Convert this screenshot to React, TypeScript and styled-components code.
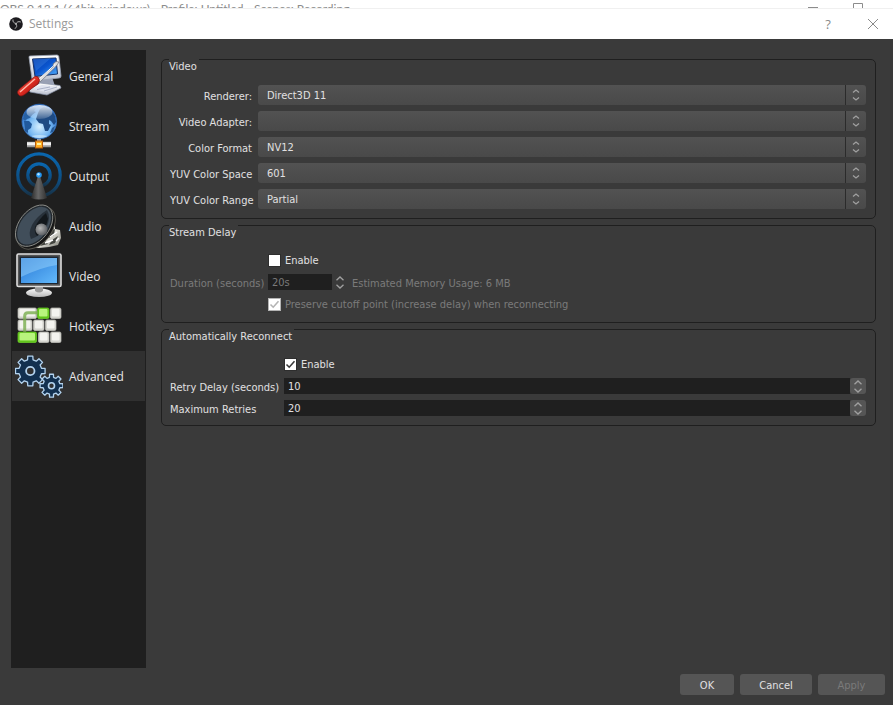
import React, { useState } from "react";
import styled, { createGlobalStyle } from "styled-components";

const GlobalStyle = createGlobalStyle`
  * { box-sizing: border-box; }
  body {
    margin: 0;
    background: #3a3a3a;
    color: #e1e0e1;
    font: 11px/16px "DejaVu Sans Condensed", "Noto Sans", sans-serif;
  }
  button, input, select { font: inherit; color: inherit; margin: 0; }
`;

const Page = styled.div`
  display: flex;
  flex-direction: column;
  min-height: 100vh;
`;

const ParentBar = styled.div`
  display: flex;
  justify-content: space-between;
  height: 9px;
  padding-right: 30px;
  overflow: hidden;
  background: #fff;
  border-bottom: 1px solid #f0f0f0;
  color: #8c8c8c;
  font: 12px/18px Lato, sans-serif;
  white-space: nowrap;
`;

const TitleBar = styled.header`
  display: flex;
  align-items: center;
  height: 30px;
  padding: 0 13px 0 9px;
  background: #fff;
  color: #999;
`;

const Title = styled.h1`
  flex: 1;
  margin: 0 0 0 6px;
  font: 400 12px/12px "Open Sans", sans-serif;
`;

const CaptionButton = styled.button`
  display: flex;
  align-items: center;
  justify-content: center;
  width: 14px;
  height: 20px;
  margin-left: 31px;
  padding: 0;
  border: 0;
  background: none;
  color: #8a8a8a;
  font: 13px/18px "Open Sans", sans-serif;
`;

const Content = styled.div`
  display: flex;
  flex: 1;
  gap: 15px;
  padding: 11px 17px 6px 11px;
`;

const Sidebar = styled.nav`
  flex: 0 0 135px;
  padding: 1px;
  background: #1f1f1f;
`;

const NavItem = styled.button<{ $active: boolean }>`
  display: flex;
  align-items: center;
  gap: 6px;
  width: 100%;
  height: 50px;
  padding: 0 0 0 3px;
  border: 0;
  background: ${(p) => (p.$active ? "#303030" : "transparent")};
  color: #e6e6e6;
  font: 12px/18px "Open Sans", sans-serif;
  text-align: left;
`;

const NavLabel = styled.span`
  padding-top: 2px;
`;

const Panels = styled.main`
  display: flex;
  flex: 1;
  flex-direction: column;
  gap: 6px;
  padding-top: 9px;
`;

const Group = styled.fieldset<{ $top?: number; $bottom?: number }>`
  min-width: 0;
  margin: 0;
  padding: ${(p) => p.$top ?? 26}px 9px ${(p) => p.$bottom ?? 9}px 8px;
  border: 1px solid #1f1f1f;
  border-radius: 5px;
`;

/* The one-pixel box keeps the caption hanging just under the frame line. */
const Legend = styled.legend`
  height: 1px;
  margin-left: -1px;
  padding: 0 2px 0 0;
  line-height: 16px;
`;

const Form = styled.div<{ $label: number; $gap: number; $space: number }>`
  display: grid;
  grid-template-columns: ${(p) => p.$label}px minmax(0, 1fr);
  column-gap: ${(p) => p.$gap}px;
  row-gap: ${(p) => p.$space}px;
  align-items: center;
`;

const Label = styled.label<{ $right?: boolean; $dim?: boolean }>`
  height: 16px;
  line-height: 20px;
  color: ${(p) => (p.$dim ? "#7a7a7a" : "inherit")};
  text-align: ${(p) => (p.$right ? "right" : "left")};
  white-space: nowrap;
`;

const SelectBox = styled.div`
  position: relative;
  display: flex;
  height: 20px;
`;

const Select = styled.select`
  appearance: none;
  width: 100%;
  padding: 2px 30px 0 9px;
  border: 0;
  border-radius: 3px;
  background: linear-gradient(#525252, #494949);
`;

const SelectArrow = styled.span`
  position: absolute;
  inset: 0 0 0 auto;
  display: flex;
  align-items: center;
  justify-content: center;
  width: 21px;
  border-left: 1px solid #2b2b2b;
  pointer-events: none;
`;

const CheckRow = styled.label<{ $dim?: boolean }>`
  display: flex;
  grid-column: 2;
  align-items: center;
  gap: 4px;
  height: 16px;
  color: ${(p) => (p.$dim ? "#7a7a7a" : "inherit")};
`;

const CheckText = styled.span`
  padding-top: 2px;
`;

const CheckBox = styled.span<{ $dim?: boolean }>`
  display: grid;
  width: 13px;
  height: 13px;
  border: 1px solid ${(p) => (p.$dim ? "#b4b4b4" : "#2e2e2e")};
  background: #fff;
  color: ${(p) => (p.$dim ? "#b4b4b4" : "#3a3a3a")};
  input, svg { grid-area: 1 / 1; }
  input { width: 11px; height: 11px; opacity: 0; }
  input:not(:checked) + svg { visibility: hidden; }
`;

const SpinRow = styled.div`
  display: flex;
  align-items: center;
  height: 16px;
`;

const Field = styled.input<{ $narrow?: boolean }>`
  flex: ${(p) => (p.$narrow ? "0 0 64px" : "1")};
  min-width: 0;
  height: 16px;
  padding: 2px 4px 0;
  border: 0;
  background: #1f1f1f;
  appearance: textfield;
  &::-webkit-inner-spin-button { appearance: none; }
  &:disabled { color: #7a7a7a; }
`;

const Spinner = styled.span<{ $flat?: boolean }>`
  display: flex;
  flex: 0 0 16px;
  flex-direction: column;
  height: 16px;
  border-radius: 3px;
  background: ${(p) => (p.$flat ? "transparent" : "#555")};
`;

const StepButton = styled.button`
  display: flex;
  align-items: center;
  justify-content: center;
  height: 8px;
  padding: 0;
  border: 0;
  background: none;
`;

const Hint = styled.span`
  height: 16px;
  padding-left: 4px;
  color: #7a7a7a;
  line-height: 20px;
  white-space: nowrap;
`;

const Footer = styled.footer`
  display: flex;
  justify-content: flex-end;
  gap: 6px;
  padding: 0 8px 10px;
`;

const PushButton = styled.button<{ $w: number }>`
  width: ${(p) => p.$w}px;
  height: 21px;
  padding: 2px 0 0;
  border: 0;
  border-radius: 3px;
  background: #555;
  &:disabled { color: #7a7a7a; }
`;

const Chevron = ({ down }: { down?: boolean }) => (
  <svg width="10" height="5" viewBox="0 0 10 5" fill="none" stroke="#a0a0a0" strokeWidth="1.3">
    <path d={down ? "M1.5 .7 5 4 8.500 .7" : "M1.5 4.300 5 1 8.500 4.300"} />
  </svg>
);

const Tick = () => (
  <svg width="11" height="11" viewBox="0 0 11 11" fill="none" stroke="currentColor" strokeWidth="1.6">
    <path d="M1.500 5.500 4.200 8.200 9.500 2.300" />
  </svg>
);

const Logo = () => (
  <svg width="14" height="14" viewBox="0 0 14 14" fill="none">
    <circle cx="7" cy="7" r="6.800" fill="#1b1a1e" />
    <path d="M4 2.500C3.500 5 5 6 7 6.500M11.800 5C9 4 7.800 5.200 7 7M5.700 11.500C8.200 10.500 8 8.500 7 7" stroke="#b8b8b8" strokeWidth="1" />
    <circle cx="7" cy="7" r="1" fill="#aaa" />
  </svg>
);

const GeneralIcon = () => (
  <svg width="48" height="48" viewBox="0 0 48 48">
    <defs>
      <linearGradient id="gScreen" x1="0" y1="0" x2="1" y2="1">
        <stop offset="0" stopColor="#0638a5" /><stop offset=".5" stopColor="#0a55cf" /><stop offset="1" stopColor="#58b5ff" />
      </linearGradient>
      <linearGradient id="gHandle" x1="0" y1="0" x2="1" y2="1">
        <stop offset="0" stopColor="#ff8b77" /><stop offset=".5" stopColor="#db2a20" /><stop offset="1" stopColor="#8d0a0a" />
      </linearGradient>
      <linearGradient id="gCase" x1="0" y1="0" x2="0" y2="1">
        <stop offset="0" stopColor="#fff" /><stop offset="1" stopColor="#b9bfce" />
      </linearGradient>
    </defs>
    <path d="M22 27 37 25 40 34 25 35Z" fill="#98a0b4" />
    <path d="M14 37 25 31 45 33.500 46 36 32 43 15 40Z" fill="url(#gCase)" stroke="#8790a6" strokeWidth=".7" />
    <path d="M18 37 27 33 42 35 31 40Z" fill="#dfe3ef" />
    <path d="M29 39 42 35M22 37.500 35 35" stroke="#aab2c7" />
    <path d="M14 5Q14 4 15 4L42 3Q43.500 3 43.800 4.500L46 24Q46 26 44 26L19 29Q17.500 29 17 27Z" fill="url(#gCase)" stroke="#9ba3b5" strokeWidth=".8" />
    <path d="M17.500 7 41 6 42.500 22 20 24.500Z" fill="url(#gScreen)" stroke="#163167" />
    <path d="M18 7 36 6 21 19Z" fill="#4c94ee" opacity=".3" />
    <path d="M22 28 38.500 14.500 38 12 41 9.500 44 10 42 13 40 15.500 25 30Z" fill="#ddd" stroke="#676b77" strokeWidth=".7" />
    <path d="M24 27 40 12.500" stroke="#fff" />
    <path d="M3 42Q1 39 8 34Q14 29 18 26Q20 23 23 25Q26 28 23 32L16 37Q9 44 6 44Q4 44 3 42Z" fill="url(#gHandle)" stroke="#811" strokeWidth=".7" />
    <path d="M5 40Q13 33 20 27" stroke="#ffb8a8" strokeWidth="1.500" fill="none" />
  </svg>
);

const StreamIcon = () => (
  <svg width="48" height="48" viewBox="0 0 48 48">
    <defs>
      <radialGradient id="sSea" cx=".5" cy=".65" r=".6">
        <stop offset="0" stopColor="#d5efff" /><stop offset=".55" stopColor="#72b5f1" /><stop offset="1" stopColor="#1d62c4" />
      </radialGradient>
      <linearGradient id="sGlow" x1="0" y1="0" x2="0" y2="1">
        <stop offset="0" stopColor="#fff" stopOpacity=".85" /><stop offset="1" stopColor="#fff" stopOpacity=".15" />
      </linearGradient>
    </defs>
    <path d="M24 34V42" stroke="#aaa" strokeWidth="4" />
    <path d="M12 42.500H36" stroke="#999" strokeWidth="5.500" />
    <path d="M12 41.800H36" stroke="#f1f1f1" strokeWidth="3" />
    <rect x="20.500" y="39" width="7" height="7" fill="#ffae22" stroke="#b65c0b" />
    <path d="M22 41H26V43H22Z" fill="#fff0a0" />
    <circle cx="24.300" cy="19.500" r="17.300" fill="url(#sSea)" stroke="#356fb9" strokeWidth=".8" />
    <path d="M9 13Q12 7 18 5L21 6 19 9 21 10 17 13 15 16 12 17 10 19 8 17Z" fill="#2861a4" />
    <path d="M9 19 14 19 17 22 16 26 13 28 13 31 10 29Z" fill="#21599c" />
    <path d="M23 11 25 7 29 5 36 8 40 14 41 20 39 23 36 19 34 18 34 22 36 23 33 29 30 29 28 22 24 21 21 17Z" fill="#1e4b84" />
    <path d="M37 26 40 24 38 30 35 31Z" fill="#245894" />
    <ellipse cx="24.500" cy="10" rx="13" ry="7" fill="url(#sGlow)" />
    <path d="M16 34Q24 32 33 34Q24 38 16 34Z" fill="#dcf1ff" opacity=".6" />
  </svg>
);

const OutputIcon = () => (
  <svg width="48" height="48" viewBox="0 0 48 48">
    <defs>
      <linearGradient id="oRing" x1="0" y1="0" x2="0" y2="1">
        <stop offset="0" stopColor="#0a66ad" /><stop offset=".6" stopColor="#0c4f85" /><stop offset="1" stopColor="#183144" />
      </linearGradient>
      <linearGradient id="oCone" x1="0" y1="0" x2="1" y2="0">
        <stop offset="0" stopColor="#292929" /><stop offset=".45" stopColor="#666" /><stop offset="1" stopColor="#303030" />
      </linearGradient>
    </defs>
    <circle cx="24" cy="23" r="21.200" fill="none" stroke="url(#oRing)" strokeWidth="3.200" />
    <circle cx="24" cy="23" r="11.200" fill="none" stroke="url(#oRing)" strokeWidth="3.200" />
    <path d="M23 24H25L32 46Q24 49 16 46Z" fill="url(#oCone)" />
    <circle cx="24" cy="23" r="2.800" fill="#2497f2" />
    <circle cx="23.500" cy="22.200" r="1.200" fill="#b4e2ff" />
  </svg>
);

const AudioIcon = () => (
  <svg width="48" height="48" viewBox="0 0 48 48">
    <defs>
      <linearGradient id="aBody" x1="0" y1="0" x2="1" y2="1">
        <stop offset="0" stopColor="#555" /><stop offset=".6" stopColor="#e8e8e0" /><stop offset="1" stopColor="#77776f" />
      </linearGradient>
      <radialGradient id="aCap" cx=".4" cy=".4" r=".7">
        <stop offset="0" stopColor="#b5b5b5" /><stop offset="1" stopColor="#4d5155" />
      </radialGradient>
    </defs>
    <path d="M36 17 40 23 40 27 45 28 46 36 43 43 34 45 24 46 13 45 27 37Z" fill="url(#aBody)" />
    <path d="M36 29 40 27 39 33 34 36M37 38 43 34 40 41 34 43M25 44 30 39 33 42" fill="#42443f" />
    <path d="M35 35 42 30M30 41 38 38M41 39 44 36" stroke="#fff" strokeWidth="1.500" />
    <g transform="rotate(-52 19.500 24)">
      <ellipse cx="19" cy="26.500" rx="24" ry="15.500" fill="#161616" stroke="#5a5850" />
      <ellipse cx="19.500" cy="23.500" rx="23.500" ry="15" fill="#22282e" stroke="#8c8d88" strokeWidth=".9" />
      <ellipse cx="19.500" cy="23.500" rx="21.500" ry="13.300" fill="#414e5a" />
    </g>
    <path d="M32 8Q22 14 17 23Q13 31 16 37Q26 34 32 24Q36 15 32 8Z" fill="#0b0f13" opacity=".45" />
    <path d="M31 11Q24 17 20 25Q19 31 22 34Q31 28 33 17Z" fill="#080a0d" opacity=".65" />
    <circle cx="26.500" cy="27.500" r="6" fill="url(#aCap)" />
  </svg>
);

const VideoIcon = () => (
  <svg width="48" height="48" viewBox="0 0 48 48">
    <defs>
      <linearGradient id="vScreen" x1="0" y1="0" x2="1" y2="1">
        <stop offset="0" stopColor="#2878d5" /><stop offset="1" stopColor="#63b9fb" />
      </linearGradient>
      <linearGradient id="vFoot" x1="0" y1="0" x2="0" y2="1">
        <stop offset="0" stopColor="#fafafa" /><stop offset="1" stopColor="#b9b9b9" />
      </linearGradient>
    </defs>
    <ellipse cx="24" cy="40.700" rx="13" ry="4.300" fill="url(#vFoot)" />
    <path d="M20 34H28V39Q24 42 20 39Z" fill="#999" />
    <rect x="2" y="2" width="44" height="32.500" rx="1.500" fill="#555" stroke="#dedede" strokeWidth="1.600" />
    <rect x="4.500" y="4.500" width="39" height="27.500" fill="#1d2733" />
    <rect x="6" y="6" width="36" height="25" fill="url(#vScreen)" />
    <path d="M6 6H42V13Q27 15 6 25Z" fill="#a7ddff" opacity=".42" />
  </svg>
);

const keyCaps = [
  { x: 3, y: 6, w: 18.5, green: false }, { x: 22.5, y: 6, w: 11.5, green: true }, { x: 35.5, y: 6, w: 10.5, green: false },
  { x: 3, y: 18, w: 14, green: false }, { x: 18.5, y: 18, w: 10.5, green: false }, { x: 30.5, y: 18, w: 10.5, green: false },
  { x: 3, y: 30, w: 18.5, green: true }, { x: 23.5, y: 30, w: 10.5, green: false }, { x: 35.5, y: 30, w: 10.5, green: false },
];

const HotkeysIcon = () => (
  <svg width="48" height="48" viewBox="0 0 48 48">
    {keyCaps.map((k) => (
      <g key={`${k.x}-${k.y}`}>
        <rect x={k.x} y={k.y} width={k.w} height="10.5" rx="1.500" fill={k.green ? "#62c51c" : "#d4d4ce"} stroke={k.green ? "#72d72d" : "#c4c4be"} strokeWidth=".7" />
        <rect x={k.x + 1.5} y={k.y + 1} width={k.w - 3} height="7.5" rx="1" fill={k.green ? "#b8f47d" : "#f3f3ef"} />
      </g>
    ))}
    <path d="M9.700 31V14Q9.700 10.700 13 10.700H23" fill="none" stroke="#78ad4e" strokeWidth="3" opacity=".8" />
  </svg>
);

const gearPath = (cx: number, cy: number, outer: number, inner: number) => {
  const points: string[] = [];
  for (let i = 0; i < 8; i++) {
    const mid = (i * Math.PI) / 4;
    [[inner, -0.24], [outer, -0.17], [outer, 0.17], [inner, 0.24]].forEach(([r, a]) =>
      points.push(`${(cx + r * Math.cos(mid + a)).toFixed(2)} ${(cy + r * Math.sin(mid + a)).toFixed(2)}`)
    );
  }
  return `M${points.join("L")}Z`;
};

const AdvancedIcon = () => (
  <svg width="48" height="48" viewBox="0 0 48 48" fill="#12304f" stroke="#b3d3ef" strokeLinejoin="round">
    <path d={gearPath(15.3, 19, 15, 11.5)} strokeWidth="1.300" />
    <circle cx="15.300" cy="19" r="4.200" fill="#303030" strokeWidth="1.800" />
    <path d={gearPath(36.5, 33.7, 11.6, 8.6)} strokeWidth="1.300" />
    <circle cx="36.500" cy="33.700" r="3" fill="#303030" strokeWidth="1.600" />
  </svg>
);

const sections = [
  { name: "General", Icon: GeneralIcon },
  { name: "Stream", Icon: StreamIcon },
  { name: "Output", Icon: OutputIcon },
  { name: "Audio", Icon: AudioIcon },
  { name: "Video", Icon: VideoIcon },
  { name: "Hotkeys", Icon: HotkeysIcon },
  { name: "Advanced", Icon: AdvancedIcon },
];

const videoOptions = [
  { id: "renderer", label: "Renderer:", value: "Direct3D 11" },
  { id: "adapter", label: "Video Adapter:", value: "" },
  { id: "format", label: "Color Format", value: "NV12" },
  { id: "space", label: "YUV Color Space", value: "601" },
  { id: "range", label: "YUV Color Range", value: "Partial" },
];

const Steps = ({ flat, name, onStep }: { flat?: boolean; name: string; onStep?: (by: number) => void }) => (
  <Spinner $flat={flat}>
    <StepButton type="button" disabled={flat} aria-label={`Increase ${name}`} onClick={() => onStep?.(1)}><Chevron /></StepButton>
    <StepButton type="button" disabled={flat} aria-label={`Decrease ${name}`} onClick={() => onStep?.(-1)}><Chevron down /></StepButton>
  </Spinner>
);

const Check = ({ label, dim, initial }: { label: string; dim?: boolean; initial?: boolean }) => (
  <CheckRow $dim={dim}>
    <CheckBox $dim={dim}>
      <input type="checkbox" defaultChecked={initial} disabled={dim} />
      <Tick />
    </CheckBox>
    <CheckText>{label}</CheckText>
  </CheckRow>
);

const NumberRow = ({ id, label, initial }: { id: string; label: string; initial: number }) => {
  const [value, setValue] = useState(initial);
  return (
    <>
      <Label htmlFor={id}>{label}</Label>
      <SpinRow>
        <Field id={id} type="number" value={value} onChange={(e) => setValue(Number(e.target.value))} />
        <Steps name={label} onStep={(by) => setValue(value + by)} />
      </SpinRow>
    </>
  );
};

export default function App() {
  const [active, setActive] = useState("Advanced");
  return (
    <Page>
      <GlobalStyle />
      <ParentBar>
        <span>OBS 0.13.1 (64bit, windows) - Profile: Untitled - Scenes: Recording</span>
        <svg width="56" height="10" viewBox="0 0 56 10" fill="none" stroke="#8c8c8c">
          <path d="M1 7.500H11M46.500 10V3.500H55.500V10" />
        </svg>
      </ParentBar>
      <TitleBar>
        <Logo />
        <Title>Settings</Title>
        <CaptionButton type="button" aria-label="Help">?</CaptionButton>
        <CaptionButton type="button" aria-label="Close">
          <svg width="12" height="12" viewBox="0 0 12 12" stroke="#8a8a8a"><path d="M1 1 11 11M11 1 1 11" /></svg>
        </CaptionButton>
      </TitleBar>
      <Content>
        <Sidebar>
          {sections.map(({ name, Icon }) => (
            <NavItem key={name} type="button" $active={name === active} onClick={() => setActive(name)}>
              <Icon />
              <NavLabel>{name}</NavLabel>
            </NavItem>
          ))}
        </Sidebar>
        <Panels>
          <Group $top={25}>
            <Legend>Video</Legend>
            <Form $label={82} $gap={6} $space={6}>
              {videoOptions.map((o) => (
                <React.Fragment key={o.id}>
                  <Label htmlFor={o.id} $right>{o.label}</Label>
                  <SelectBox>
                    <Select id={o.id} defaultValue={o.value}><option>{o.value}</option></Select>
                    <SelectArrow>
                      <svg width="8" height="12" viewBox="0 0 8 12" fill="none" stroke="#a0a0a0" strokeWidth="1.300">
                        <path d="M1 3.500 4 1 7 3.500M1 8.500 4 11 7 8.500" />
                      </svg>
                    </SelectArrow>
                  </SelectBox>
                </React.Fragment>
              ))}
            </Form>
          </Group>
          <Group $bottom={10}>
            <Legend>Stream Delay</Legend>
            <Form $label={92} $gap={6} $space={6}>
              <Check label="Enable" />
              <Label htmlFor="duration" $dim>Duration (seconds)</Label>
              <SpinRow>
                <Field id="duration" type="text" defaultValue="20s" disabled $narrow />
                <Steps flat name="duration" />
                <Hint>Estimated Memory Usage: 6 MB</Hint>
              </SpinRow>
              <Check label="Preserve cutoff point (increase delay) when reconnecting" dim initial />
            </Form>
          </Group>
          <Group>
            <Legend>Automatically Reconnect</Legend>
            <Form $label={108} $gap={6} $space={6}>
              <Check label="Enable" initial />
              <NumberRow id="retry-delay" label="Retry Delay (seconds)" initial={10} />
              <NumberRow id="max-retries" label="Maximum Retries" initial={20} />
            </Form>
          </Group>
        </Panels>
      </Content>
      <Footer>
        <PushButton type="button" $w={54}>OK</PushButton>
        <PushButton type="button" $w={72}>Cancel</PushButton>
        <PushButton type="button" $w={67} disabled>Apply</PushButton>
      </Footer>
    </Page>
  );
}
